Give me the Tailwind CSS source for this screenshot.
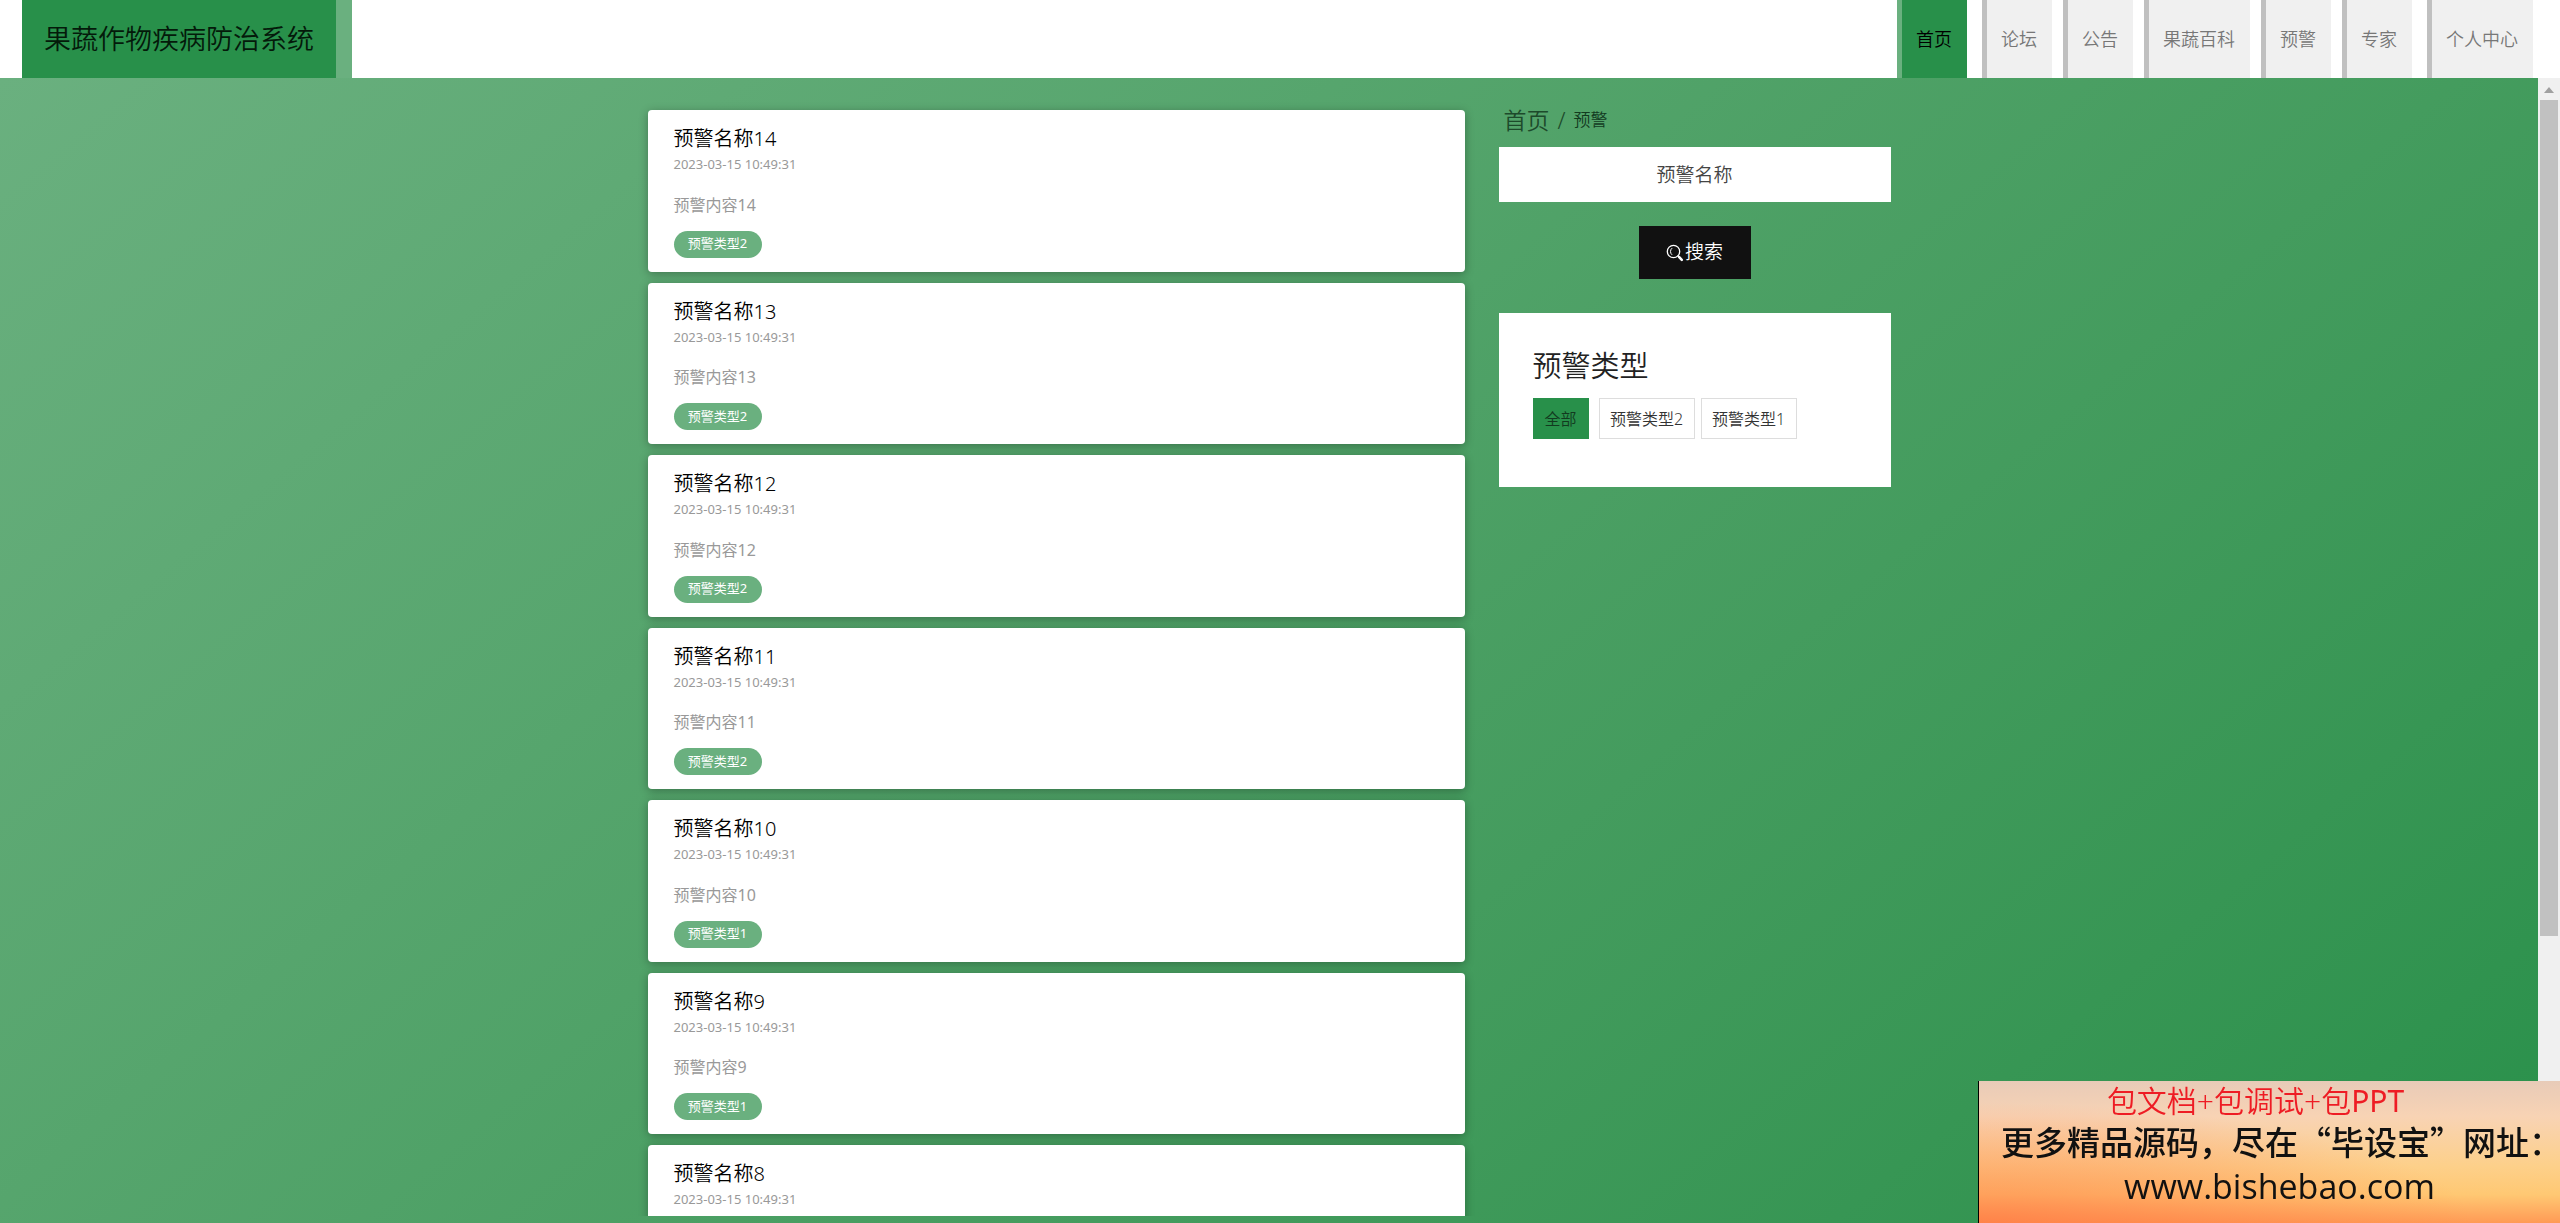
<!DOCTYPE html>
<html lang="zh-CN">
<head>
    <meta charset="UTF-8">
    <meta name="viewport" content="width=device-width, initial-scale=1.0">
    <title>果蔬作物疾病防治系统</title>
    <script src="https://cdn.jsdelivr.net/npm/@tailwindcss/browser@4"></script>
</head>
<body class="flex h-screen flex-col overflow-hidden font-['Noto_Sans','Noto_Sans_CJK_SC',sans-serif] font-[350]">
    <!-- Header -->
    <header class="flex h-[78px] shrink-0 justify-between bg-white pl-[22px] pr-[27px]">
        <a href="#" class="flex items-center border-r-16 border-[#6ab07f] bg-[#28904a] px-[22px] text-[27px] text-[#041a0a]">果蔬作物疾病防治系统</a>
        <nav class="flex gap-[11px] text-lg text-[#777]">
            <a href="#" class="mr-1 flex items-center border-l-5 border-[#6ab07f] bg-[#28904a] pl-[14px] pr-[15px] text-black">首页</a>
            <a href="#" class="flex items-center border-l-5 border-[#c0c0c0] bg-[#f0f0f0] pl-[14px] pr-[15px]">论坛</a>
            <a href="#" class="flex items-center border-l-5 border-[#c0c0c0] bg-[#f0f0f0] pl-[14px] pr-[15px]">公告</a>
            <a href="#" class="flex items-center border-l-5 border-[#c0c0c0] bg-[#f0f0f0] pl-[14px] pr-[15px]">果蔬百科</a>
            <a href="#" class="flex items-center border-l-5 border-[#c0c0c0] bg-[#f0f0f0] pl-[14px] pr-[15px]">预警</a>
            <a href="#" class="flex items-center border-l-5 border-[#c0c0c0] bg-[#f0f0f0] pl-[14px] pr-[15px]">专家</a>
            <a href="#" class="ml-1 flex items-center border-l-5 border-[#c0c0c0] bg-[#f0f0f0] pl-[14px] pr-[15px]">个人中心</a>
        </nav>
    </header>

    <div class="flex min-h-0 flex-1 bg-linear-140 from-[#6ab07f] to-[#28904a]">
        <!-- Content -->
        <main class="flex min-w-0 flex-1 justify-center pb-[7px]">
            <div class="flex w-full max-w-[1243px] gap-[34px] overflow-y-clip">
                <!-- Warning list -->
                <section id="list" class="flex flex-1 flex-col gap-[11px] pt-8"></section>

                <!-- Sidebar -->
                <aside class="w-[392px] shrink-0 pt-5">
                    <div class="mb-[5px] flex h-11 items-center gap-2 pl-[5px] text-[#1d4a2b]">
                        <a href="#" class="text-[23px]">首页</a>
                        <span class="text-[23px]">/</span>
                        <span class="text-[17px] text-[#123a1f]">预警</span>
                    </div>
                    <form class="flex flex-col items-center" onsubmit="return false">
                        <input type="text" aria-label="预警名称" placeholder="预警名称" class="h-[55px] w-full bg-white text-center text-[19px] placeholder:text-[#444]">
                        <button class="mt-6 flex h-[53px] w-28 items-center justify-center gap-px bg-[#111] text-[19px] text-white">
                            <svg class="size-[18px]" viewBox="0 0 18 18" fill="none" stroke="currentColor" stroke-linecap="round">
                                <circle cx="7.5" cy="7.5" r="6.2" stroke-width="1.3"/>
                                <path d="M5.8 4.4A4 4 0 0 0 5.8 10.6" stroke-width="1"/>
                                <path d="M12 12l.8.8" stroke-width="1.3"/>
                                <path d="M13.2 13.2l2.6 2.6" stroke-width="2.6"/>
                            </svg>
                            搜索
                        </button>
                    </form>
                    <div class="mt-[34px] h-[174px] bg-white pl-[34px] pt-[33px]">
                        <h2 class="text-[29px] leading-10 text-[#222]">预警类型</h2>
                        <div class="mt-3 flex text-base text-[#333]">
                            <button class="mr-[10px] h-[41px] bg-[#28904a] px-3 text-[#123a1f]">全部</button>
                            <button class="mr-[6px] h-[41px] w-24 border border-[#ddd]">预警类型2</button>
                            <button class="h-[41px] w-24 border border-[#ddd]">预警类型1</button>
                        </div>
                    </div>
                </aside>
            </div>
        </main>

        <!-- Scrollbar -->
        <div class="flex w-[22px] flex-col items-center bg-[#f0f0f0]">
            <svg class="h-[22px] w-3 shrink-0" viewBox="0 0 12 22"><path d="M1 15l5-6 5 6z" fill="#a0a0a0"/></svg>
            <div class="h-[73%] w-[18px] bg-[#c1c1c1]"></div>
        </div>
    </div>

    <!-- Promo banner -->
    <div class="fixed bottom-0 right-0 flex h-[142px] w-[582px] flex-col items-center border-l border-black bg-[radial-gradient(ellipse_at_0%_100%,rgba(255,115,65,0.6),rgba(255,150,80,0)_60%),linear-gradient(#e8cbb8,#f8d3b4_25%,#fdd08a_60%,#ffc873_80%,#ff9a55)] whitespace-nowrap">
        <p class="mr-7 text-[30px] leading-10 text-[#ee1c24]">包文档+包调试+包<span class="font-normal">PPT</span></p>
        <p class="ml-6 font-['Noto_Sans_CJK_SC',sans-serif] text-[33px] leading-10 font-medium text-[#111]">更多精品源码，尽在“毕设宝”网址：</p>
        <a href="#" class="ml-5 font-['Open_Sans',sans-serif] text-[34px] leading-[50px] font-medium text-[#111]">www.bishebao.com</a>
    </div>

    <script>
        const list = document.getElementById('list');

        // Newest warnings first
        for (let n = 14; n >= 8; n--) {
            const type = n > 10 ? 2 : 1;
            list.innerHTML += `
                <a href="#" class="block shrink-0 rounded bg-white px-[26px] pt-[13px] pb-[14px] shadow-[0_2px_10px_rgba(0,0,0,0.3)]">
                    <h3 class="text-xl leading-8 text-black">预警名称${n}</h3>
                    <p class="text-[13px] leading-normal font-normal text-[#999]">2023-03-15 10:49:31</p>
                    <p class="mt-[18px] text-base leading-6 font-normal text-[#999]">预警内容${n}</p>
                    <span class="mt-[14px] flex h-[27px] w-[88px] items-center justify-center rounded-full bg-[#6ab07f] text-[13px] font-normal text-white">预警类型${type}</span>
                </a>`;
        }
    </script>
</body>
</html>
